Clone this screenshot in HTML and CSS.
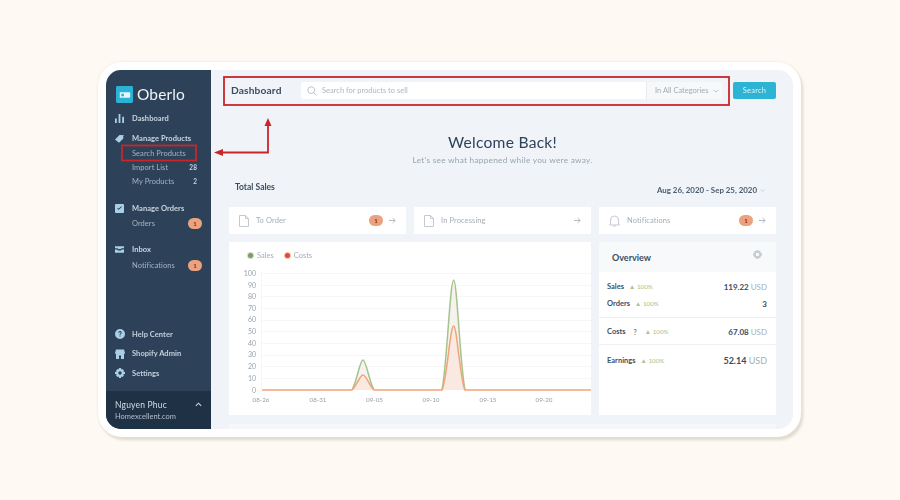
FILE: index.html
```html
<!DOCTYPE html>
<html lang="en">
<head>
<meta charset="utf-8">
<title>Oberlo Dashboard</title>
<link rel="stylesheet" href="styles.css">
</head>
<body>
<div class="frame">
  <div class="app">
    <aside class="sidebar">
      <div class="logo">
        <span class="logo-mark"><svg viewBox="0 0 18 18" width="17" height="17"><rect width="18" height="18" rx="1.5" fill="#2bb3d6"/><path d="M4 6.500h10a1 1 0 0 1 1 1v4a1 1 0 0 1-1 1H4z" fill="#e8f6fb"/><circle cx="7" cy="9.500" r="1.600" fill="#2bb3d6"/></svg></span>
        <span class="logo-text">Oberlo</span>
      </div>
      <nav class="nav">
        <div class="row head"><svg class="ico" viewBox="0 0 10 10"><path d="M0 5h2v5H0zM4 0h2v10H4zM8 3h2v7H8z"/></svg>Dashboard</div>
        <div class="group-gap-s"></div>
        <div class="row head"><svg class="ico" viewBox="0 0 10 10"><path d="M0 6 5 1h2l1 .5 2-.5-1 2 .3 2L4.500 9.800z"/></svg>Manage Products</div>
        <div class="row sub">Search Products</div>
        <div class="row sub">Import List<span class="count">28</span></div>
        <div class="row sub">My Products<span class="count">2</span></div>
        <div class="group-gap"></div>
        <div class="row head"><svg class="ico" viewBox="0 0 10 10"><path fill-rule="evenodd" d="M1 0h8a1 1 0 0 1 1 1v8a1 1 0 0 1-1 1H1a1 1 0 0 1-1-1V1a1 1 0 0 1 1-1zm1.500 5L4 6.800 7.800 3 7 2.400 4 5.300 3.100 4.300z"/></svg>Manage Orders</div>
        <div class="row sub">Orders<span class="badge">1</span></div>
        <div class="group-gap-m"></div>
        <div class="row head"><svg class="ico" viewBox="0 0 10 10"><path d="M0 1.500h10v2H7L6.500 4.500h-3L3 3.500H0zM0 5h2.500l.7 1h3.600l.7-1H10v3.500H0z"/></svg>Inbox</div>
        <div class="row sub notif">Notifications<span class="badge">1</span></div>
      </nav>
      <nav class="nav-bottom">
        <div class="row tall"><svg class="ico big" viewBox="0 0 10 10"><path fill-rule="evenodd" d="M5 0a5 5 0 1 1 0 10A5 5 0 0 1 5 0zM3.300 3.800h1c0-.5.300-.8.700-.8s.7.300.7.700c0 .7-1.200.8-1.200 2.100h1c0-.8 1.200-1 1.200-2.200C6.700 2.700 6 2 5 2S3.300 2.700 3.300 3.800zM4.500 6.500v1h1v-1z"/></svg>Help Center</div>
        <div class="row tall"><svg class="ico big" viewBox="0 0 10 10"><path fill-rule="evenodd" d="M1 .5h8L10 4a1.500 1.500 0 0 1-1 1v5H6V6.500H4V10H1V5A1.500 1.500 0 0 1 0 4z"/></svg>Shopify Admin</div>
        <div class="row tall"><svg class="ico big" viewBox="0 0 10 10"><path fill-rule="evenodd" d="M4 0h2l.3 1.400 1-.500L8.900 2.300l-.6 1.100L10 4v2l-1.700.6.600 1.100-1.600 1.400-1-.5L6 10H4l-.3-1.400-1 .5L1.100 7.700l.6-1.100L0 6V4l1.700-.6-.6-1.100L2.700.9l1 .5zM5 3.300a1.700 1.700 0 1 0 0 3.400 1.700 1.700 0 0 0 0-3.400z"/></svg>Settings</div>
      </nav>
      <div class="user">
        <div class="user-text">
          <div class="user-name">Nguyen Phuc</div>
          <div class="user-shop">Homexcellent.com</div>
        </div>
        <svg class="caret" viewBox="0 0 8 5" width="7" height="5"><path d="M1 4 4 1l3 3" fill="none" stroke="#c9d5e0" stroke-width="1.300"/></svg>
      </div>
    </aside>

    <main class="main">
      <header class="topbar">
        <div class="page-title">Dashboard</div>
        <div class="search">
          <svg class="search-ico" viewBox="0 0 10 10" width="10" height="10"><circle cx="4.200" cy="4.200" r="3.400" fill="none" stroke="#b7c0c9" stroke-width=".9"/><path d="m6.800 6.800 2.700 2.700" stroke="#b7c0c9" stroke-width=".9"/></svg>
          <span class="search-ph">Search for products to sell</span>
          <span class="search-cat">In All Categories<svg viewBox="0 0 8 5" width="6" height="4"><path d="m1 1 3 3 3-3" fill="none" stroke="#aab3bc"/></svg></span>
        </div>
        <button class="search-btn">Search</button>
      </header>

      <section class="welcome">
        <h1>Welcome Back!</h1>
        <p>Let's see what happened while you were away.</p>
      </section>

      <div class="sales-head">
        <span class="sales-title">Total Sales</span>
        <span class="sales-date">Aug 26, 2020 - Sep 25, 2020<svg viewBox="0 0 8 5" width="5" height="3"><path d="m1 1 3 3 3-3" fill="none" stroke="#aab3bc"/></svg></span>
      </div>

      <div class="cards">
        <div class="card">
          <svg class="card-ico" viewBox="0 0 10 12" width="10" height="12"><path d="M.5.5h6l3 3v8h-9zM6.500.5v3h3" fill="none" stroke="#c3cad1"/></svg>
          <span class="card-label">To Order</span><span class="badge card-badge">1</span><svg class="arrow" viewBox="0 0 7 7" width="7" height="7"><path d="M0 3.500h6.200M3.600 1l2.600 2.500L3.600 6" fill="none" stroke="#b3bcc5"/></svg>
        </div>
        <div class="card">
          <svg class="card-ico" viewBox="0 0 10 12" width="10" height="12"><path d="M.5.5h6l3 3v8h-9zM6.500.5v3h3" fill="none" stroke="#c3cad1"/></svg>
          <span class="card-label">In Processing</span><svg class="arrow" viewBox="0 0 7 7" width="7" height="7"><path d="M0 3.500h6.200M3.600 1l2.600 2.500L3.600 6" fill="none" stroke="#b3bcc5"/></svg>
        </div>
        <div class="card">
          <svg class="card-ico" viewBox="0 0 11 12" width="11" height="12"><path d="M1.500 9V5a4 4 0 0 1 8 0v4l1 1H.5zM4 11h3" fill="none" stroke="#c3cad1"/></svg>
          <span class="card-label">Notifications</span><span class="badge card-badge">1</span><svg class="arrow" viewBox="0 0 7 7" width="7" height="7"><path d="M0 3.500h6.200M3.600 1l2.600 2.500L3.600 6" fill="none" stroke="#b3bcc5"/></svg>
        </div>
      </div>

      <div class="panels">
        <section class="chart-card">
          <div class="legend">
            <span class="dot dot-sales"></span><span>Sales</span>
            <span class="dot dot-costs"></span><span>Costs</span>
          </div>
          <svg class="chart" viewBox="229 269 362 146" width="362" height="146">
            <g class="grid">
              <path d="M262 273.500H591M262 285.500H591M262 296.500H591M262 308.500H591M262 320.500H591M262 331.500H591M262 343.500H591M262 355.500H591M262 366.500H591M262 378.500H591"/>
              <path d="M261.500 272V390"/>
            </g>
            <g class="ylab">
              <text x="256" y="276">100</text><text x="256" y="288">90</text><text x="256" y="299">80</text><text x="256" y="311">70</text><text x="256" y="322">60</text><text x="256" y="334">50</text><text x="256" y="346">40</text><text x="256" y="357">30</text><text x="256" y="369">20</text><text x="256" y="381">10</text><text x="256" y="393">0</text>
            </g>
            <g class="xlab">
              <text x="261" y="402">08-26</text><text x="318" y="402">08-31</text><text x="374.500" y="402">09-05</text><text x="431" y="402">09-10</text><text x="488" y="402">09-15</text><text x="544" y="402">09-20</text>
            </g>
            <path class="fill-s" d="M352 390C357 381 360 360 363 360C366 360 369 381 374 390Z"/>
            <path class="fill-s" d="M442 390C447 365 450 280 453.700 280C457 280 460 365 465 390Z"/>
            <path class="fill-c" d="M352 390C357 385 360 375 363 375C366 375 369 385 374 390Z"/>
            <path class="fill-c" d="M442 390C447 380 450 326 453.700 326C457 326 460 380 465 390Z"/>
            <path class="line-s" d="M352 390C357 381 360 360 363 360C366 360 369 381 374 390"/>
            <path class="line-s" d="M442 390C447 365 450 280 453.700 280C457 280 460 365 465 390"/>
            <path class="line-c" d="M262 390H352C357 385 360 375 363 375C366 375 369 385 374 390H442C447 380 450 326 453.700 326C457 326 460 380 465 390H591"/>
          </svg>
        </section>
        <section class="overview">
          <div class="ov-head">
            <span>Overview</span>
            <svg viewBox="0 0 10 10" width="9" height="9"><path fill="#c5ccd3" fill-rule="evenodd" d="M4 0h2l.3 1.400 1-.500L8.900 2.300l-.6 1.100L10 4v2l-1.700.6.600 1.100-1.600 1.400-1-.5L6 10H4l-.3-1.400-1 .5L1.100 7.700l.6-1.100L0 6V4l1.700-.6-.6-1.100L2.700.9l1 .5zM5 3a2 2 0 1 0 0 4 2 2 0 0 0 0-4z"/></svg>
          </div>
          <div class="ov-block">
            <div class="ov-row"><span class="ov-name">Sales</span><span class="trend">▲ 100%</span><span class="ov-val">119.22 <i>USD</i></span></div>
            <div class="ov-row"><span class="ov-name">Orders</span><span class="trend">▲ 100%</span><span class="ov-val">3</span></div>
          </div>
          <div class="ov-block middle">
            <div class="ov-row"><span class="ov-name">Costs</span><span class="help">?</span><span class="trend">▲ 100%</span><span class="ov-val">67.08 <i>USD</i></span></div>
          </div>
          <div class="ov-block last">
            <div class="ov-row"><span class="ov-name">Earnings</span><span class="trend">▲ 100%</span><span class="ov-val lg">52.14 <i>USD</i></span></div>
          </div>
        </section>
      </div>
      <div class="next-strip"></div>
    </main>
  </div>

  <svg class="annotations" viewBox="0 0 703 375" width="703" height="375">
    <rect x="126" y="15" width="505" height="28" />
    <rect x="24" y="83.500" width="74" height="15" />
    <path d="M170 63v27.500H125" />
    <path class="head-fill" d="M170 56l-3.500 8h7zM116 90.500l9-3.500v7z"/>
  </svg>
</div>
</body>
</html>
```

FILE: styles.css
```css
* { box-sizing: border-box; }
html, body { margin: 0; height: 100%; }
body {
  background: #fef9f3;
  font-family: Lato, "Liberation Sans", sans-serif;
  overflow: hidden;
}
.frame {
  position: relative;
  width: 703px;
  height: 375px;
  margin: 62px 0 0 98px;
  padding: 8px;
  background: #fff;
  border-radius: 24px;
  box-shadow: 0 0 3px #ece7dc, 2px 3px 3px #ddd8cb;
}
.app {
  display: flex;
  height: 100%;
  border-radius: 15px;
  overflow: hidden;
  background: #f0f4f8;
  filter: blur(.3px);
}

/* Sidebar */
.sidebar {
  width: 105px;
  flex: none;
  display: flex;
  flex-direction: column;
  background: #2d4259;
  color: #c9d5e0;
  font-size: 7.500px;
}
.logo {
  display: flex;
  align-items: center;
  gap: 4px;
  height: 41px;
  padding: 7px 0 0 10px;
}
.logo-mark { display: flex; }
.logo-text { font-size: 15.500px; color: #eef3f7; letter-spacing: .1px; }
.nav { display: flex; flex-direction: column; }
.row {
  display: flex;
  align-items: center;
  height: 14px;
  padding: 0 14px 0 26px;
  position: relative;
  letter-spacing: .05px;
}
.head { height: 15px; font-weight: 700; color: #c9d5e0; }
.sub { color: #a3b3c3; }
.notif { margin-top: 1px; }
.group-gap-s { height: 5px; }
.group-gap { height: 13px; }
.group-gap-m { height: 12px; }
.ico {
  position: absolute;
  left: 9px;
  width: 9px;
  height: 9px;
  fill: #a9d0e6;
}
.ico.big { width: 10px; height: 10px; }
.count { margin-left: auto; font-size: 6.500px; color: #c9d5e0; font-weight: 700; }
.badge {
  display: flex;
  align-items: center;
  justify-content: center;
  width: 14px;
  height: 11px;
  border-radius: 6px;
  background: #eaa27f;
  color: #8e2a1c;
  font-size: 6px;
  font-weight: 700;
  margin-left: auto;
}
.row .badge { margin-right: -5px; }
.nav-bottom { margin-top: auto; padding-bottom: 8px; }
.tall { height: 19.500px; font-weight: 700; color: #c3d0dc; }
.user {
  height: 38px;
  flex: none;
  display: flex;
  align-items: flex-start;
  justify-content: space-between;
  padding: 8px 9px 0 9px;
  background: #1e3145;
}
.user-name { font-size: 8.500px; line-height: 12px; color: #d5dee6; letter-spacing: .2px; }
.user-shop { font-size: 7.500px; line-height: 11px; color: #b2bfcb; }
.caret { margin-top: 3px; }

/* Main */
.main {
  flex: 1;
  min-width: 0;
  padding: 12px 17px 0 18px;
  color: #33465a;
}
.topbar { display: flex; align-items: stretch; height: 17px; }
.page-title {
  width: 72px;
  padding-left: 2px;
  font-size: 10.200px;
  line-height: 17px;
  font-weight: 700;
  color: #3a4d61;
  letter-spacing: .15px;
}
.search {
  width: 421px;
  display: flex;
  align-items: center;
  background: #fff;
  border-radius: 2px;
  padding-left: 6px;
  font-size: 7.500px;
  color: #aeb6be;
}
.search-ico { flex: none; }
.search-ph { margin-left: 5px; flex: 1; }
.search-cat {
  width: 76px;
  height: 100%;
  flex: none;
  display: flex;
  align-items: center;
  justify-content: space-between;
  padding: 0 3px 0 8px;
  border-left: 1px solid #e6eaee;
  background: #f6f8fa;
  color: #a3acb5;
}
.search-btn {
  width: 43px;
  margin-left: 11px;
  padding: 0;
  border: 0;
  border-radius: 2px;
  background: #2db3d3;
  color: #dff4fa;
  font: 400 7.500px Lato, "Liberation Sans", sans-serif;
  letter-spacing: .2px;
}
.welcome { margin-top: 33px; text-align: center; }
.welcome h1 {
  margin: 0;
  font-size: 15.600px;
  line-height: 20px;
  font-weight: 400;
  color: #2f435a;
  letter-spacing: .25px;
}
.welcome p {
  margin: 2px 0 0;
  font-size: 8.300px;
  line-height: 12px;
  color: #9aa4ae;
  letter-spacing: .25px;
}
.sales-head {
  display: flex;
  justify-content: space-between;
  align-items: center;
  height: 14px;
  margin-top: 14px;
  padding: 0 11px 0 6px;
}
.sales-title { font-size: 8.500px; font-weight: 700; color: #3a4d61; }
.sales-date {
  display: flex;
  align-items: center;
  gap: 3px;
  margin-top: 6px;
  font-size: 7.900px;
  font-weight: 700;
  color: #4a5b6d;
}
.cards {
  display: grid;
  grid-template-columns: repeat(3, 1fr);
  gap: 8px;
  margin-top: 13px;
}
.card {
  height: 27px;
  display: flex;
  align-items: center;
  padding: 0 10px;
  background: #fff;
  font-size: 7.500px;
  color: #a5aeb7;
  letter-spacing: .1px;
}
.card-label { margin-left: 7px; }
.card-badge { margin-right: 6px; }
.card-label + .arrow { margin-left: auto; }
.panels {
  display: grid;
  grid-template-columns: 1fr 177px;
  gap: 8px;
  margin-top: 8px;
  height: 173px;
}
.chart-card { background: #fff; }
.legend {
  display: flex;
  align-items: center;
  height: 27px;
  padding-left: 19px;
  font-size: 7.500px;
  color: #a5aeb7;
}
.dot {
  width: 5px;
  height: 5px;
  border-radius: 50%;
  margin-right: 4px;
}
.dot-sales { background: #7d9a6a; box-shadow: 0 0 0 1px #cfe0c0; }
.dot-costs { background: #de4b36; box-shadow: 0 0 0 1px #f5c7ae; margin-left: 11px; }
.chart { display: block; }
.grid path { stroke: #f4f6f8; stroke-width: 1; fill: none; }
.ylab text { font-size: 7px; fill: #98a2ac; text-anchor: end; }
.xlab text { font-size: 6.300px; fill: #98a2ac; text-anchor: middle; }
.fill-s { fill: #f6f3ef; }
.fill-c { fill: #f9e9e0; }
.line-s { fill: none; stroke: #a5c38c; stroke-width: 1.500; }
.line-c { fill: none; stroke: #f0a47b; stroke-width: 1.500; }

.overview { background: #fff; display: flex; flex-direction: column; }
.ov-head {
  height: 30px;
  flex: none;
  display: flex;
  align-items: center;
  justify-content: space-between;
  padding: 0 14px 0 13px;
  background: #f7f9fb;
  font-size: 9px;
  font-weight: 700;
  color: #3a4d61;
}
.ov-head svg { margin-top: -5px; }
.ov-block {
  padding: 6px 9px 5px 8px;
  border-bottom: 1px solid #edf0f3;
}
.ov-block.middle { padding: 5px 9px 4px 8px; }
.ov-block.last { border-bottom: 0; padding-top: 7px; }
.ov-row {
  display: flex;
  align-items: center;
  height: 17px;
  font-size: 7.500px;
  font-weight: 700;
  color: #3f5063;
}
.trend { margin-left: 5px; font-size: 6.300px; color: #a6c48c; font-weight: 400; }
.help { margin-left: 8px; margin-right: 3px; font-size: 7px; color: #6c7a88; }
.ov-val { margin-left: auto; font-size: 8px; color: #3a4d61; }
.ov-val i { font-style: normal; font-weight: 400; color: #a5aeb7; }
.ov-val.lg { font-size: 9px; }
.next-strip { height: 14px; margin-top: 9px; background: #f5f7fa; }

/* Red callouts */
.annotations {
  position: absolute;
  left: 0;
  top: 0;
  fill: none;
  stroke: #c9252b;
  stroke-width: 1.800;
  pointer-events: none;
}
.annotations .head-fill { fill: #c9252b; stroke: none; }
```
